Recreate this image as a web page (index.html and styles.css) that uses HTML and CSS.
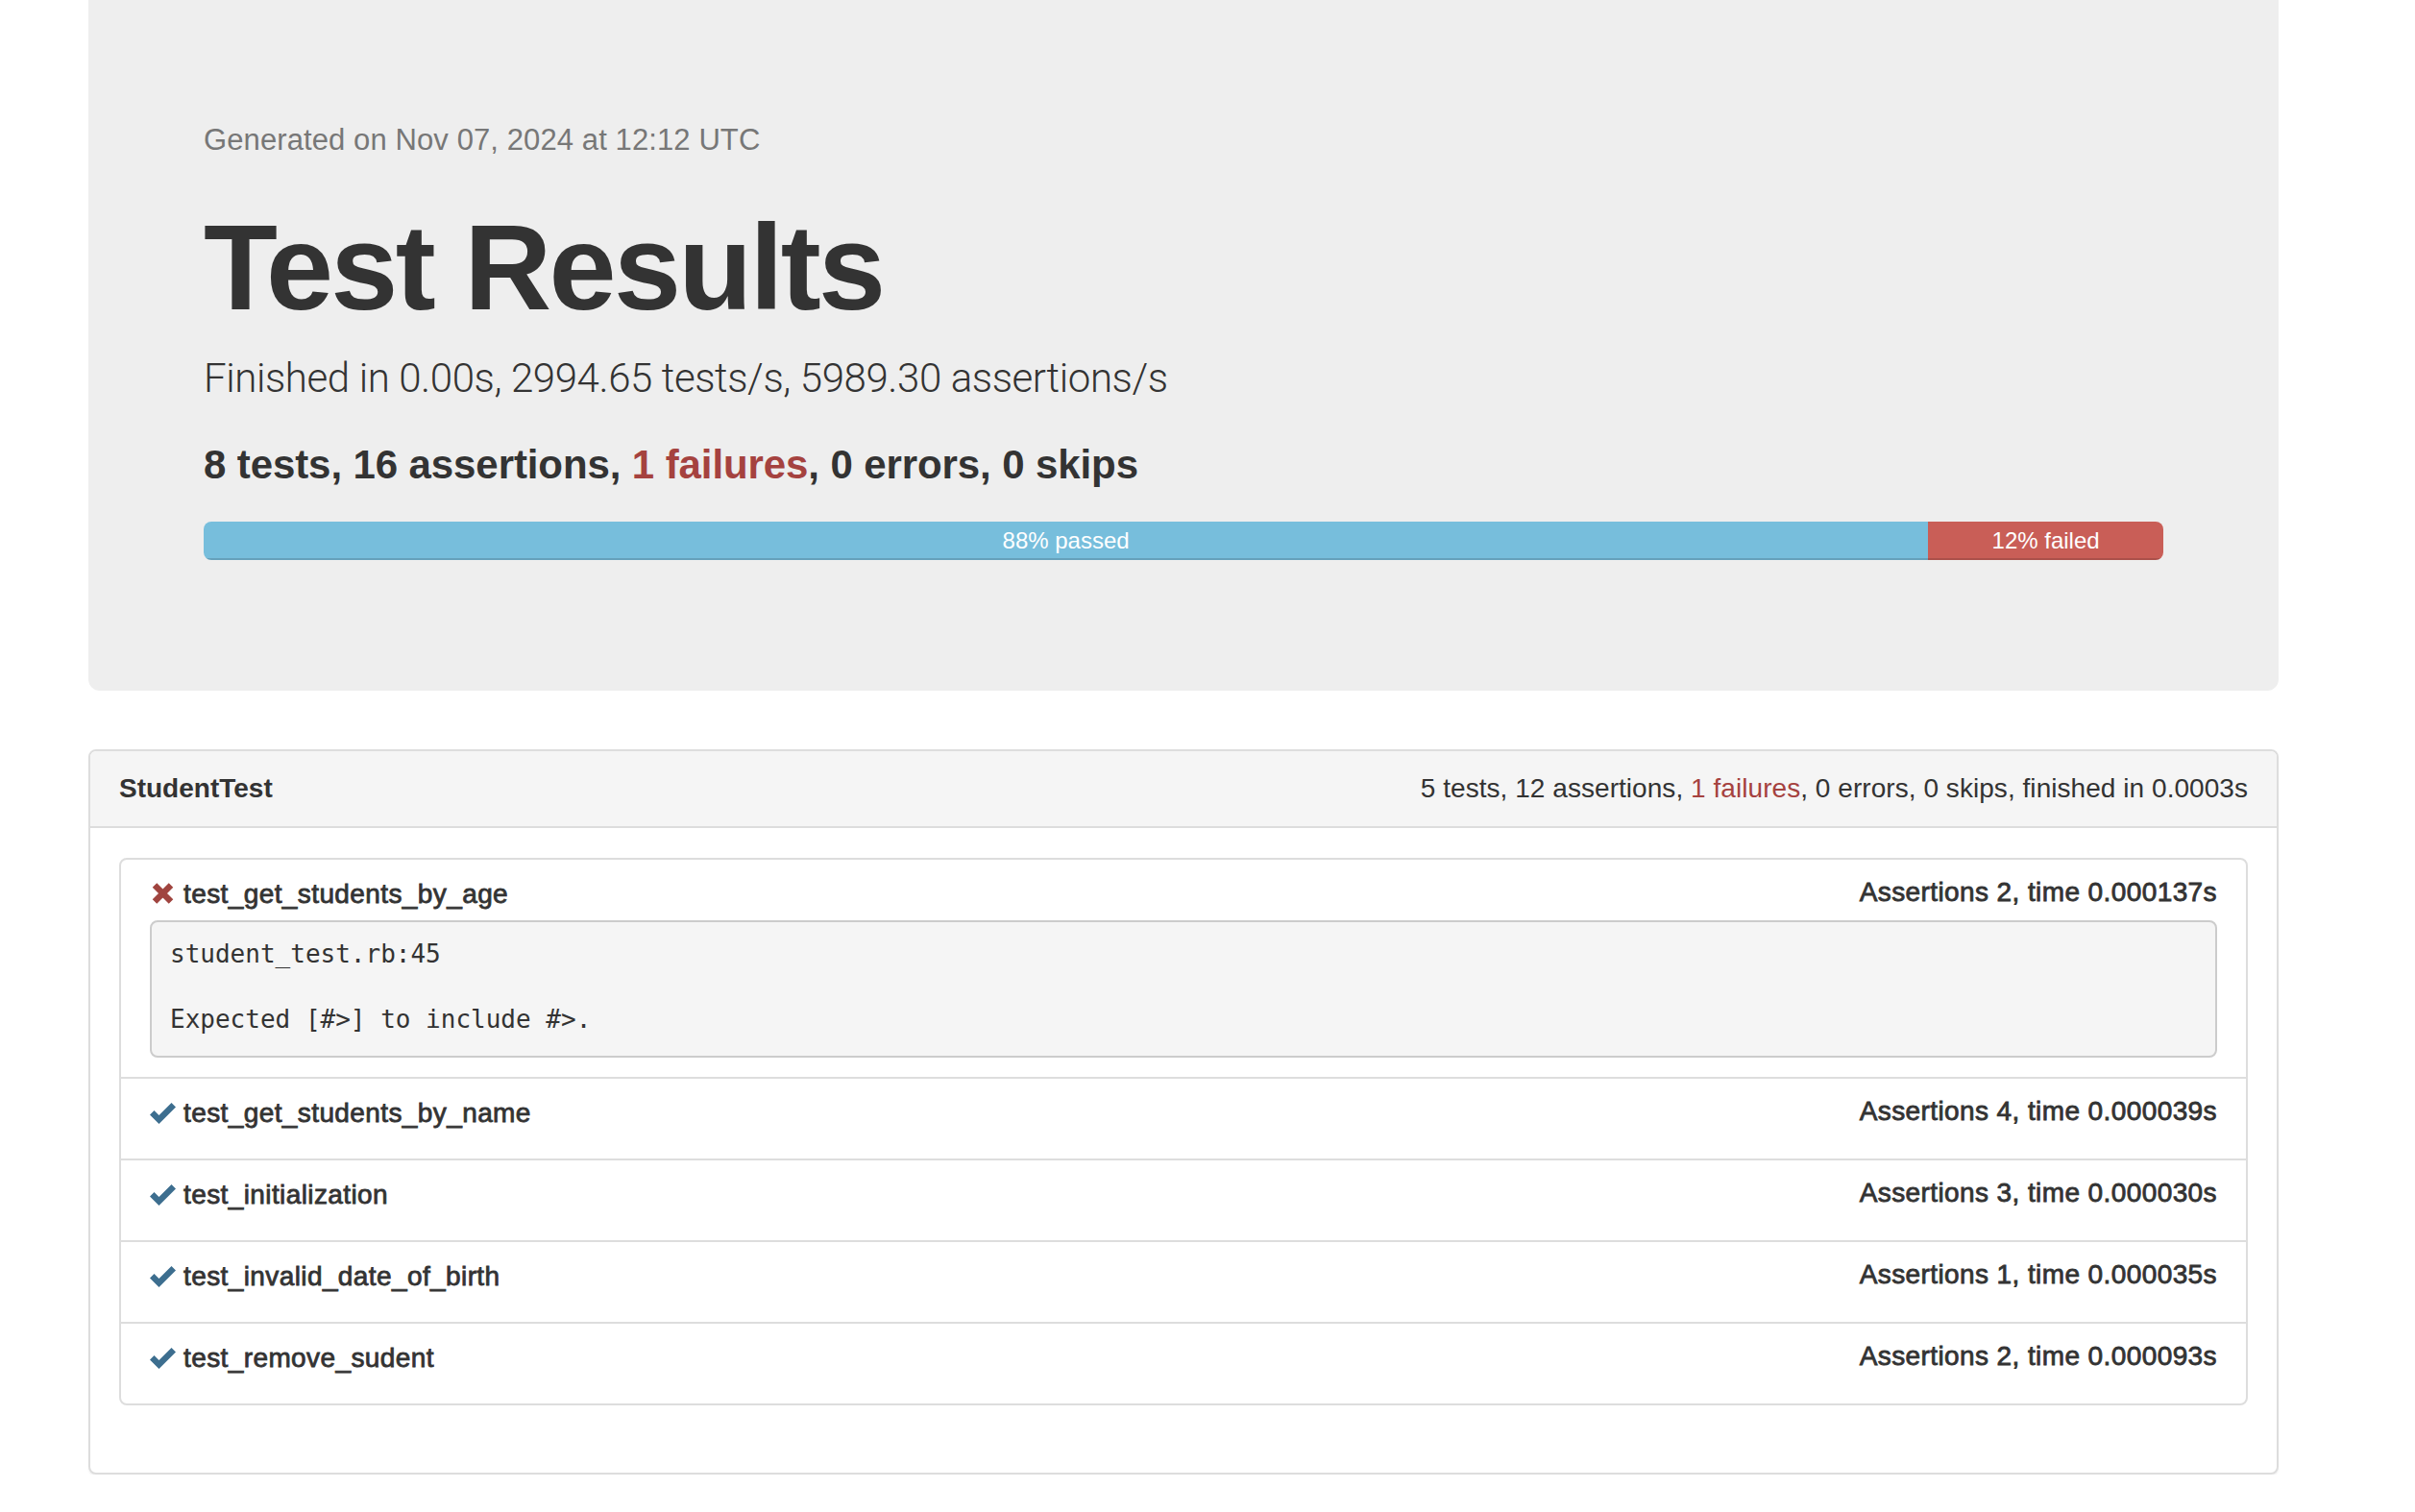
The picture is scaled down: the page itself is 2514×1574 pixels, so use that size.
FILE: index.html
```html
<!DOCTYPE html>
<html lang="en">
<head>
<meta charset="utf-8">
<title>Test Results</title>
<link rel="stylesheet" href="styles.css">
</head>
<body>
<div class="container">
  <div class="jumbotron">
    <p class="generated">Generated on Nov 07, 2024 at 12:12 UTC</p>
    <h1 class="title">Test Results</h1>
    <p class="lead">Finished in 0.00s, 2994.65 tests/s, 5989.30 assertions/s</p>
    <p class="summary">8 tests, 16 assertions, <span class="danger">1 failures</span>, 0 errors, 0 skips</p>
    <div class="progress">
      <div class="bar bar-pass" style="width:88%">88% passed</div>
      <div class="bar bar-fail" style="width:12%">12% failed</div>
    </div>
  </div>

  <div class="panel">
    <div class="panel-heading">
      <span class="suite-name">StudentTest</span>
      <span class="suite-stats">5 tests, 12 assertions, <span class="danger">1 failures</span>, 0 errors, 0 skips, finished in 0.0003s</span>
    </div>
    <div class="panel-body">
      <div class="list">
        <div class="item">
          <div class="item-head">
            <span class="name"><svg class="icon icon-fail" viewBox="0 0 27 23"><path d="M5 2.5 L22 19.5 M22 2.5 L5 19.5" /></svg>test_get_students_by_age</span>
            <span class="meta">Assertions 2, time 0.000137s</span>
          </div>
          <pre class="failure">student_test.rb:45

Expected [#&gt;] to include #&gt;.</pre>
        </div>
        <div class="item">
          <div class="item-head">
            <span class="name"><svg class="icon icon-pass" viewBox="0 0 27 23"><polygon points="0,13.5 4.5,9 9.5,14 22.5,1 27,5.5 9.5,23" /></svg>test_get_students_by_name</span>
            <span class="meta">Assertions 4, time 0.000039s</span>
          </div>
        </div>
        <div class="item">
          <div class="item-head">
            <span class="name"><svg class="icon icon-pass" viewBox="0 0 27 23"><polygon points="0,13.5 4.5,9 9.5,14 22.5,1 27,5.5 9.5,23" /></svg>test_initialization</span>
            <span class="meta">Assertions 3, time 0.000030s</span>
          </div>
        </div>
        <div class="item">
          <div class="item-head">
            <span class="name"><svg class="icon icon-pass" viewBox="0 0 27 23"><polygon points="0,13.5 4.5,9 9.5,14 22.5,1 27,5.5 9.5,23" /></svg>test_invalid_date_of_birth</span>
            <span class="meta">Assertions 1, time 0.000035s</span>
          </div>
        </div>
        <div class="item">
          <div class="item-head">
            <span class="name"><svg class="icon icon-pass" viewBox="0 0 27 23"><polygon points="0,13.5 4.5,9 9.5,14 22.5,1 27,5.5 9.5,23" /></svg>test_remove_sudent</span>
            <span class="meta">Assertions 2, time 0.000093s</span>
          </div>
        </div>
      </div>
    </div>
  </div>
</div>
</body>
</html>
```

FILE: styles.css
```css
* {
  box-sizing: border-box;
}

html, body {
  margin: 0;
  padding: 0;
  background: #fff;
}

body {
  font-family: "Liberation Sans", Arial, Helvetica, sans-serif;
  font-size: 28px;
  line-height: 40px;
  color: #333;
}

.container {
  width: 2280px;
  margin: 0 0 0 92px;
}

/* ---------- Jumbotron ---------- */
.jumbotron {
  background: #eeeeee;
  border-radius: 0 0 12px 12px;
  padding: 124px 120px 136px;
  margin-bottom: 61px;
}

.generated {
  margin: 0;
  font-size: 31px;
  line-height: 44px;
  letter-spacing: 0.1px;
  color: #777;
}

.title {
  margin: 42px 0 16px;
  font-size: 126px;
  line-height: 138px;
  font-weight: 700;
  letter-spacing: -2.7px;
  color: #333;
}

.lead {
  margin: 0 0 30px;
  font-family: Roboto, "Liberation Sans", sans-serif;
  font-weight: 300;
  font-size: 42px;
  line-height: 60px;
  letter-spacing: -0.4px;
  color: #333;
}

.summary {
  margin: 0 0 29px;
  font-size: 42px;
  line-height: 60px;
  font-weight: 700;
  letter-spacing: -0.1px;
  color: #333;
}

.danger {
  color: #a5423f;
}

.progress {
  display: flex;
  height: 40px;
  border-radius: 8px;
  overflow: hidden;
  background: #f5f5f5;
}

.bar {
  height: 40px;
  line-height: 40px;
  font-size: 24px;
  color: #fff;
  text-align: center;
  box-shadow: inset 0 -2px 0 rgba(0, 0, 0, 0.15);
}

.bar-pass {
  background: #77bedc;
}

.bar-fail {
  background: #c95e57;
}

/* ---------- Panel ---------- */
.panel {
  border: 2px solid #dddddd;
  border-radius: 8px;
  background: #fff;
  box-shadow: 0 2px 2px rgba(0, 0, 0, 0.05);
}

.panel-heading {
  display: flex;
  justify-content: space-between;
  align-items: baseline;
  padding: 19px 30px;
  background: #f5f5f5;
  border-bottom: 2px solid #dddddd;
  border-radius: 6px 6px 0 0;
}

.suite-name {
  font-weight: 700;
}

.suite-stats {
  letter-spacing: 0.05px;
}

.panel-body {
  padding: 31px 30px 30px;
}

.list {
  border: 2px solid #dddddd;
  border-radius: 8px;
  margin-bottom: 40px;
}

.item {
  padding: 20px 30px;
}

.item + .item {
  border-top: 2px solid #dddddd;
}

.item-head {
  display: flex;
  justify-content: space-between;
  align-items: baseline;
  line-height: 32px;
  margin-bottom: 11px;
  font-size: 28px;
  letter-spacing: 0.4px;
  -webkit-text-stroke: 0.8px #333;
}

.item-head .name,
.item-head .meta {
  white-space: nowrap;
}

.item-head .meta {
  position: relative;
  top: -2px;
}

.icon {
  display: inline-block;
  width: 27px;
  height: 23px;
  margin-right: 8px;
  vertical-align: -2px;
}

.icon-pass {
  fill: #3d6e8f;
  stroke: none;
}

.icon-fail {
  fill: none;
  stroke: #a0443f;
  stroke-width: 6.4px;
  stroke-linecap: butt;
}

.failure {
  margin: 2px 0 0;
  padding: 16px 19px 21px;
  background: #f5f5f5;
  border: 2px solid #cccccc;
  border-radius: 8px;
  font-family: "DejaVu Sans Mono", "Liberation Mono", monospace;
  font-size: 26px;
  line-height: 34px;
  color: #333;
  white-space: pre-wrap;
}
```
